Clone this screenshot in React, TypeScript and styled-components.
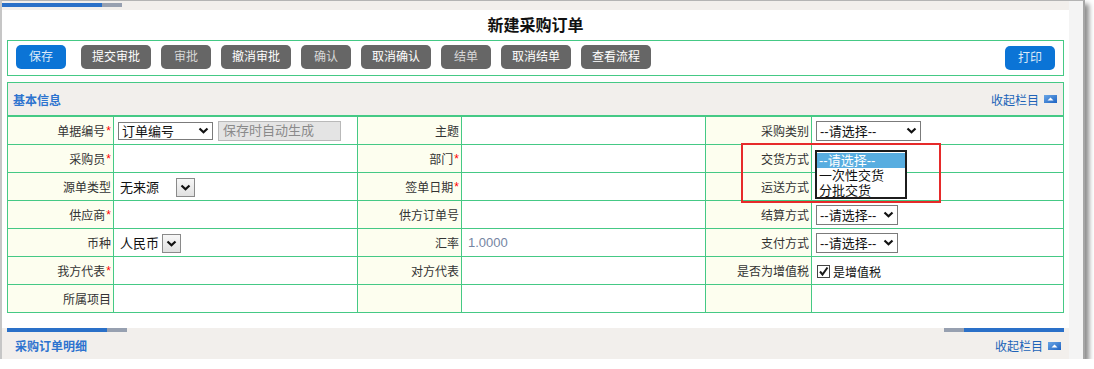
import React from "react";
import styled, {createGlobalStyle} from "styled-components";

const GREEN = '#45c985';
const BEIGE = '#f2efec';

const GlobalStyle = createGlobalStyle`
  body {
    margin: 0;
    background: #fff;
    font-family: "Liberation Sans", "Noto Sans CJK SC", sans-serif;
    font-size: 12px;
    color: #333;
  }
`

const Chevron = () => (
   <svg width="11" height="7" viewBox="0 0 11 7">
      <polyline points="1.5,1.5 5.5,5.3 9.5,1.5" fill="none" stroke="#111" strokeWidth="2.2"/>
   </svg>
);

const CollapseIcon = () => (
   <svg width="13" height="8" viewBox="0 0 13 8">
      <defs>
         <linearGradient id="ci" x1="0" y1="0" x2="1" y2="1">
            <stop offset="0" stopColor="#6aa6e6"/>
            <stop offset="1" stopColor="#1f63c2"/>
         </linearGradient>
      </defs>
      <rect x="0" y="0" width="13" height="8" fill="url(#ci)"/>
      <path d="M3.5 5.5 L6.5 2.5 L9.5 5.5 Z" fill="#fff"/>
   </svg>
);

const CheckMark = () => (
   <svg width="11" height="11" viewBox="0 0 11 11">
      <polyline points="2,5.5 4.5,8.5 9.5,1.5" fill="none" stroke="#1a1a1a" strokeWidth="2"/>
   </svg>
);

type Field = {
   label: string
   required?: boolean
   content?: React.ReactNode
   popup?: boolean
}

const tabs = [
   {text: '提交审批', wide: true},
   {text: '审批', dim: true},
   {text: '撤消审批', wide: true},
   {text: '确认', dim: true},
   {text: '取消确认', wide: true},
   {text: '结单', dim: true},
   {text: '取消结单', wide: true},
   {text: '查看流程', wide: true},
];

const buildRows = (): Field[][] => [
   [
      {label: '单据编号', required: true, content: <>
            <SelectBox $width={95} $height={18}><span>订单编号</span><Chevron/></SelectBox>
            <DisabledInput>保存时自动生成</DisabledInput>
         </>},
      {label: '主题'},
      {label: '采购类别', content: <SelectBox $width={105}><span>--请选择--</span><Chevron/></SelectBox>},
   ],
   [
      {label: '采购员', required: true},
      {label: '部门', required: true},
      {label: '交货方式', popup: true},
   ],
   [
      {label: '源单类型', content: <><PlainValue>无来源</PlainValue><ArrowButton $gap={17}><Chevron/></ArrowButton></>},
      {label: '签单日期', required: true},
      {label: '运送方式'},
   ],
   [
      {label: '供应商', required: true},
      {label: '供方订单号'},
      {label: '结算方式', content: <SelectBox $width={82}><span>--请选择--</span><Chevron/></SelectBox>},
   ],
   [
      {label: '币种', content: <><PlainValue>人民币</PlainValue><ArrowButton $gap={3}><Chevron/></ArrowButton></>},
      {label: '汇率', content: <Rate>1.0000</Rate>},
      {label: '支付方式', content: <SelectBox $width={82}><span>--请选择--</span><Chevron/></SelectBox>},
   ],
   [
      {label: '我方代表', required: true},
      {label: '对方代表'},
      {label: '是否为增值税', content: <CheckLabel><CheckBox><CheckMark/></CheckBox>是增值税</CheckLabel>},
   ],
   [
      {label: '所属项目'},
      {label: ''},
      {label: ''},
   ],
];

export default function App() {
   const rows = buildRows();

   return (
      <>
         <GlobalStyle/>
         <Frame>
            <Main>
               <TopStrip>
                  <TabBar/>
               </TopStrip>
               <Body>
                  <Title>新建采购订单</Title>
                  <Toolbar>
                     <ActionButton $primary $first>保存</ActionButton>
                     {tabs.map(t => (
                        <ActionButton key={t.text} $wide={t.wide} $dim={t.dim}>{t.text}</ActionButton>
                     ))}
                     <ActionButton $primary $right>打印</ActionButton>
                  </Toolbar>
                  <Section>
                     <SectionHeader>
                        <SectionTitle>基本信息</SectionTitle>
                        <CollapseLink>收起栏目<CollapseIcon/></CollapseLink>
                     </SectionHeader>
                     <FormGrid>
                        {rows.map((row, r) => row.map((f, c) => (
                           <React.Fragment key={`${r}-${c}`}>
                              <LabelCell>
                                 {f.label}
                                 {f.required && <Required>*</Required>}
                              </LabelCell>
                              <ValueCell $last={c === 2}>
                                 {f.content}
                                 {f.popup && (
                                    <OptionList>
                                       <OptionItem $active>--请选择--</OptionItem>
                                       <OptionItem>一次性交货</OptionItem>
                                       <OptionItem>分批交货</OptionItem>
                                    </OptionList>
                                 )}
                              </ValueCell>
                           </React.Fragment>
                        )))}
                        <Highlight/>
                     </FormGrid>
                  </Section>
               </Body>
               <BottomSection>
                  <BarRow>
                     <TabBar/>
                     <TabBar $reverse/>
                  </BarRow>
                  <BottomHeader>
                     <SectionTitle>采购订单明细</SectionTitle>
                     <CollapseLink>收起栏目<CollapseIcon/></CollapseLink>
                  </BottomHeader>
               </BottomSection>
            </Main>
            <Track/>
         </Frame>
      </>
   );
}

const Frame = styled.div`
  width: 1085px;
  height: 359px;
  box-sizing: border-box;
  border-top: 1px solid #b4b4b4;
  border-left: 2px solid #c6c6c6;
  border-right: 2px solid #a6a6a6;
  box-shadow: 4px 4px 5px rgba(0, 0, 0, 0.45);
  display: flex;
`
const Main = styled.div`
  width: 1067px;
  display: flex;
  flex-direction: column;
`
const Track = styled.div`
  width: 14px;
  background: #f4f4f4;
`
const TopStrip = styled.div`
  height: 9px;
  box-sizing: border-box;
  padding-top: 2px;
  background: ${BEIGE};
  display: flex;
`
const TabBar = styled.div<{ $reverse?: boolean }>`
  width: 120px;
  height: 4px;
  background: ${p => p.$reverse
    ? 'linear-gradient(to right, #97a0b0 20px, #2a70c8 20px)'
    : 'linear-gradient(to right, #2a70c8 100px, #97a0b0 100px)'};
`
const Body = styled.div`
  background: #fff;
  padding: 0 5px 15px 5px;
  display: flex;
  flex-direction: column;
`
const Title = styled.div`
  height: 30px;
  line-height: 31px;
  text-align: center;
  font-size: 16px;
  font-weight: bold;
  color: #111;
`
const Toolbar = styled.div`
  height: 36px;
  box-sizing: border-box;
  border: 1px solid ${GREEN};
  padding: 4px 8px 0 8px;
  display: flex;
  align-items: flex-start;
  gap: 10px;
`
const ActionButton = styled.button<{ $primary?: boolean, $wide?: boolean, $dim?: boolean, $first?: boolean, $right?: boolean }>`
  width: ${p => p.$wide ? 70 : 50}px;
  height: 24px;
  padding: 0;
  border: none;
  border-radius: 5px;
  background: ${p => p.$primary ? '#0b74d6' : '#666'};
  color: ${p => p.$primary ? '#dce9f8' : p.$dim ? '#d8d8d8' : '#fff'};
  font-family: inherit;
  font-size: 12px;
  line-height: 24px;
  margin-right: ${p => p.$first ? 5 : 0}px;
  margin-left: ${p => p.$right ? 'auto' : '0'};
  margin-top: ${p => p.$right ? 1 : 0}px;
`
const Section = styled.div`
  margin-top: 6px;
  border: 1px solid ${GREEN};
  border-bottom: none;
`
const SectionHeader = styled.div`
  height: 32px;
  background: ${BEIGE};
  border-bottom: 2px solid ${GREEN};
  display: flex;
  align-items: center;
  justify-content: space-between;
  padding: 0 6px 0 5px;
`
const SectionTitle = styled.span`
  font-size: 12px;
  font-weight: bold;
  color: #2d73cf;
`
const CollapseLink = styled.span`
  display: flex;
  align-items: center;
  gap: 5px;
  font-size: 12px;
  color: #2063b8;
`
const FormGrid = styled.div`
  position: relative;
  display: grid;
  grid-template-columns: 106px 244px 104px 244px 106px 251px;
  grid-auto-rows: 28px;
`
const LabelCell = styled.div`
  box-sizing: border-box;
  background: #fdfeef;
  border-right: 1px solid ${GREEN};
  border-bottom: 1px solid ${GREEN};
  display: flex;
  align-items: center;
  justify-content: flex-end;
  padding-right: 2px;
  font-size: 12px;
  color: #333;
`
const Required = styled.span`
  color: #f00;
  margin-left: 1px;
  font-size: 12px;
`
const ValueCell = styled.div<{ $last?: boolean }>`
  position: relative;
  box-sizing: border-box;
  background: #fff;
  border-right: ${p => p.$last ? 'none' : `1px solid ${GREEN}`};
  border-bottom: 1px solid ${GREEN};
  display: flex;
  align-items: center;
  padding-left: 3px;
`
const SelectBox = styled.div<{ $width: number, $height?: number }>`
  width: ${p => p.$width}px;
  height: ${p => p.$height ?? 20}px;
  box-sizing: border-box;
  border: 1px solid #7b7b7b;
  background: #fff;
  display: flex;
  align-items: center;
  justify-content: space-between;
  padding: 0 3px 0 3px;
  font-size: 13px;
  color: #111;
  margin-left: 1px;
`
const DisabledInput = styled.div`
  width: 123px;
  height: 20px;
  box-sizing: border-box;
  margin-left: 5px;
  border: 1px solid #b9b9b9;
  background: #e4e4e4;
  color: #8a8a8a;
  font-size: 13px;
  line-height: 18px;
  padding-left: 4px;
`
const PlainValue = styled.span`
  margin-left: 3px;
  font-size: 13px;
  color: #111;
`
const ArrowButton = styled.div<{ $gap: number }>`
  width: 19px;
  height: 19px;
  box-sizing: border-box;
  margin-left: ${p => p.$gap}px;
  margin-top: 1px;
  border: 1px solid #8a8a8a;
  background: linear-gradient(#f7f7f7, #e0e0e0);
  display: flex;
  align-items: center;
  justify-content: center;
`
const Rate = styled.span`
  margin-left: 3px;
  font-size: 13px;
  color: #7585a2;
`
const CheckLabel = styled.label`
  display: flex;
  align-items: center;
  gap: 3px;
  margin-left: 2px;
  margin-top: 2px;
  font-size: 12px;
  color: #111;
`
const CheckBox = styled.span`
  width: 13px;
  height: 13px;
  box-sizing: border-box;
  border: 1px solid #444;
  background: #fff;
  display: flex;
  align-items: center;
  justify-content: center;
`
const OptionList = styled.div`
  position: absolute;
  left: 3px;
  top: 5px;
  z-index: 2;
  width: 92px;
  height: 49px;
  box-sizing: border-box;
  border: 2px solid #1c1c1c;
  background: #fff;
  padding-top: 1px;
`
const OptionItem = styled.div<{ $active?: boolean }>`
  height: 15px;
  line-height: 15px;
  padding-left: 2px;
  font-size: 13px;
  color: ${p => p.$active ? '#fff' : '#111'};
  background: ${p => p.$active ? '#58ade0' : 'transparent'};
`
const Highlight = styled.div`
  position: absolute;
  left: 733px;
  top: 26px;
  width: 200px;
  height: 60px;
  box-sizing: border-box;
  border: 2px solid #e62a2a;
  z-index: 3;
  pointer-events: none;
`
const BottomSection = styled.div`
  height: 31px;
  background: ${BEIGE};
  padding: 0 5px;
  display: flex;
  flex-direction: column;
`
const BarRow = styled.div`
  display: flex;
  justify-content: space-between;
`
const BottomHeader = styled.div`
  flex: 1;
  display: flex;
  align-items: center;
  justify-content: space-between;
  padding: 0 3px 0 8px;
`
